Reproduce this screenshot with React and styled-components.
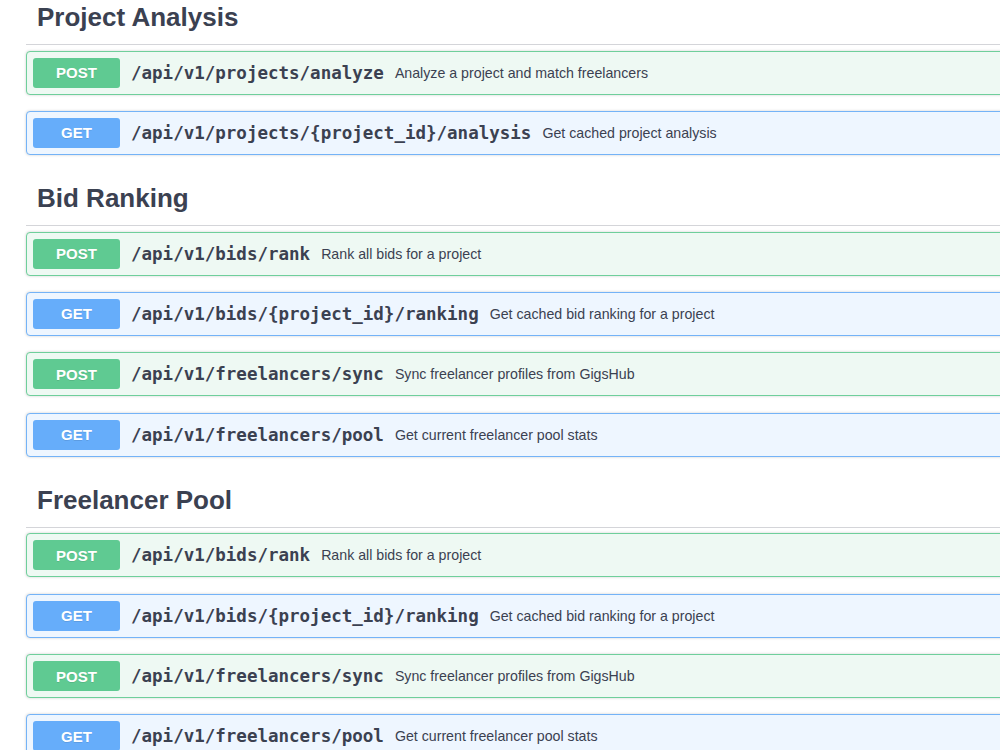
import React from "react"
import styled, { createGlobalStyle } from "styled-components"

const GlobalStyle = createGlobalStyle`
  html, body {
    margin: 0;
    padding: 0;
    background: #fff;
    overflow: hidden;
  }
  body {
    font-family: "Liberation Sans", Arial, sans-serif;
    color: #3b4151;
  }
`

const METHODS = {
  POST: { main: "#5fca92", border: "#6fcf9b", soft: "#eef9f3" },
  GET: { main: "#66adfa", border: "#74b3f7", soft: "#eef6ff" },
}

const Page = styled.div`
  width: 1120px;
  padding: 2px 0 0 26px;
  box-sizing: border-box;
`

const Section = styled.section`
  display: flex;
  flex-direction: column;

  & + & {
    margin-top: 12px;
  }
`

const TagHeading = styled.h3`
  margin: 0 0 5.5px;
  padding: 0 20px 12px 11px;
  font-size: 26px;
  line-height: 30px;
  font-weight: 700;
  color: #3b4151;
  border-bottom: 1px solid rgba(59, 65, 81, 0.22);
`

const OpBlock = styled.div`
  display: flex;
  align-items: center;
  box-sizing: border-box;
  height: 44px;
  padding: 0 6px;
  margin-bottom: 16.33px;
  border: 1px solid ${(p) => METHODS[p.$method].border};
  background: ${(p) => METHODS[p.$method].soft};
  border-radius: 4px;
  box-shadow: 0 0 3px rgba(0, 0, 0, 0.19);
`

const MethodBadge = styled.span`
  flex: 0 0 87px;
  height: 30px;
  display: flex;
  align-items: center;
  justify-content: center;
  border-radius: 3px;
  background: ${(p) => METHODS[p.$method].main};
  color: #fff;
  font-size: 15px;
  font-weight: 700;
  text-shadow: 0 1px 0 rgba(0, 0, 0, 0.1);
`

const Path = styled.span`
  padding: 0 11px;
  font-family: "DejaVu Sans Mono", "Liberation Mono", monospace;
  font-size: 17.5px;
  font-weight: 700;
  color: #3b4151;
  white-space: nowrap;
`

const Summary = styled.span`
  font-size: 14.2px;
  color: #3b4151;
  white-space: nowrap;
`

const rankingOps = [
  { method: "POST", path: "/api/v1/bids/rank", summary: "Rank all bids for a project" },
  { method: "GET", path: "/api/v1/bids/{project_id}/ranking", summary: "Get cached bid ranking for a project" },
  { method: "POST", path: "/api/v1/freelancers/sync", summary: "Sync freelancer profiles from GigsHub" },
  { method: "GET", path: "/api/v1/freelancers/pool", summary: "Get current freelancer pool stats" },
]

const sections = [
  {
    title: "Project Analysis",
    ops: [
      { method: "POST", path: "/api/v1/projects/analyze", summary: "Analyze a project and match freelancers" },
      { method: "GET", path: "/api/v1/projects/{project_id}/analysis", summary: "Get cached project analysis" },
    ],
  },
  { title: "Bid Ranking", ops: rankingOps },
  { title: "Freelancer Pool", ops: rankingOps },
]

const App = () => {
  return (
    <>
      <GlobalStyle />
      <Page>
        {sections.map((section) => (
          <Section key={section.title}>
            <TagHeading>{section.title}</TagHeading>
            {section.ops.map((op, i) => (
              <OpBlock key={i} $method={op.method}>
                <MethodBadge $method={op.method}>{op.method}</MethodBadge>
                <Path>{op.path}</Path>
                <Summary>{op.summary}</Summary>
              </OpBlock>
            ))}
          </Section>
        ))}
      </Page>
    </>
  )
}

export default App
